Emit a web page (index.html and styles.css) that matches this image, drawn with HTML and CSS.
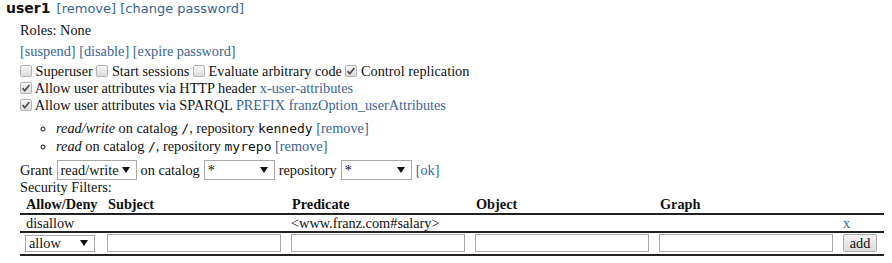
FILE: index.html
```html
<!DOCTYPE html>
<html lang="en">
<head>
    <meta charset="UTF-8">
    <title>User user1</title>
    <link rel="stylesheet" href="styles.css">
</head>
<body>
    <div class="user">
        <div class="user-head">
            <span class="name">user1</span>
            <a href="#">[remove]</a>
            <a href="#">[change password]</a>
        </div>

        <div class="user-body">
            <div class="roles">Roles: None</div>
            <div class="actions">
                <a href="#">[suspend]</a> <a href="#">[disable]</a> <a href="#">[expire password]</a>
            </div>

            <div class="perms">
                <div>
                    <label><input type="checkbox"> Superuser</label>
                    <label><input type="checkbox"> Start sessions</label>
                    <label><input type="checkbox"> Evaluate arbitrary code</label>
                    <label><input type="checkbox" checked> Control replication</label>
                </div>
                <div>
                    <label><input type="checkbox" checked> Allow user attributes via HTTP header <a href="#">x-user-attributes</a></label>
                </div>
                <div>
                    <label><input type="checkbox" checked> Allow user attributes via SPARQL <a href="#">PREFIX franzOption_userAttributes</a></label>
                </div>
            </div>

            <ul class="grants">
                <li><em>read/write</em> on catalog <code>/</code>, repository <code>kennedy</code> <a href="#">[remove]</a></li>
                <li><em>read</em> on catalog <code>/</code>, repository <code>myrepo</code> <a href="#">[remove]</a></li>
            </ul>

            <div class="grant-form">
                <span>Grant</span>
                <select class="sel-access">
                    <option>read/write</option>
                    <option>read</option>
                    <option>write</option>
                </select>
                <span>on catalog</span>
                <select class="sel-wide">
                    <option>*</option>
                </select>
                <span>repository</span>
                <select class="sel-wide">
                    <option>*</option>
                </select>
                <a href="#">[ok]</a>
            </div>

            <div class="sec-title">Security Filters:</div>

            <table class="filters">
                <colgroup>
                    <col class="c-kind">
                    <col class="c-field">
                    <col class="c-field">
                    <col class="c-field">
                    <col class="c-field">
                    <col class="c-act">
                </colgroup>
                <thead>
                    <tr>
                        <th>Allow/Deny</th>
                        <th>Subject</th>
                        <th>Predicate</th>
                        <th>Object</th>
                        <th>Graph</th>
                        <th></th>
                    </tr>
                </thead>
                <tbody>
                    <tr>
                        <td>disallow</td>
                        <td></td>
                        <td>&lt;www.franz.com#salary&gt;</td>
                        <td></td>
                        <td></td>
                        <td><a href="#">x</a></td>
                    </tr>
                    <tr class="new-row">
                        <td>
                            <select class="sel-kind">
                                <option>allow</option>
                                <option>disallow</option>
                            </select>
                        </td>
                        <td><input type="text"></td>
                        <td><input type="text"></td>
                        <td><input type="text"></td>
                        <td><input type="text"></td>
                        <td><button type="button">add</button></td>
                    </tr>
                </tbody>
            </table>
        </div>
    </div>
</body>
</html>
```

FILE: styles.css
```css
body {
    margin: 0;
    padding: 0 6px;
    font-family: "Liberation Serif", "Times New Roman", serif;
    font-size: 14.3px;
    color: #111;
    background-color: #ffffff;
}

a {
    color: #3a6494;
    text-decoration: none;
}

.user-head {
    font-family: "DejaVu Sans", Verdana, sans-serif;
    font-size: 13px;
    line-height: 16px;
}

.user-head .name {
    font-size: 14px;
    font-weight: bold;
    color: #111;
    margin-right: 2px;
}

.user-body {
    margin-left: 14px;
}

.roles {
    margin-top: 5px;
    line-height: 16px;
}

.actions {
    margin-top: 5px;
    line-height: 16px;
}

.perms {
    margin-top: 4px;
    line-height: 17px;
}

.perms input[type="checkbox"] {
    appearance: none;
    -webkit-appearance: none;
    width: 12px;
    height: 12px;
    margin: 0;
    vertical-align: -1px;
    border: 1px solid #b4b4b4;
    border-radius: 2px;
    background: linear-gradient(#f6f6f6, #dcdcdc);
}

.perms input[type="checkbox"]:checked {
    background: url("data:image/svg+xml,%3Csvg xmlns='http://www.w3.org/2000/svg' width='12' height='12' viewBox='0 0 12 12'%3E%3Cpath d='M2.5 6.2 L4.8 8.6 L9.4 3' fill='none' stroke='%23555' stroke-width='1.8'/%3E%3C/svg%3E") no-repeat center, linear-gradient(#f6f6f6, #dcdcdc);
}

.grants {
    margin: 5px 0;
    padding-left: 36px;
    line-height: 18px;
    list-style: circle;
}

.grants code {
    font-family: "DejaVu Sans Mono", monospace;
    font-size: 13px;
    line-height: 1;
}

.grant-form {
    display: flex;
    align-items: center;
    gap: 4px;
    height: 20px;
}

select {
    appearance: none;
    -webkit-appearance: none;
    box-sizing: border-box;
    font-family: "Liberation Serif", "Times New Roman", serif;
    font-size: 14.3px;
    color: #111;
    border: 1px solid #a9a9a9;
    border-radius: 0;
    padding: 0 16px 0 3px;
    margin: 0;
    background: #fff url("data:image/svg+xml,%3Csvg xmlns='http://www.w3.org/2000/svg' width='8' height='6' viewBox='0 0 8 6'%3E%3Cpath d='M0 0 H8 L4 6 Z' fill='%23111'/%3E%3C/svg%3E") no-repeat right 6px center;
}

.sel-access {
    width: 80px;
    height: 20px;
}

.sel-wide {
    width: 71px;
    height: 20px;
}

.sec-title {
    line-height: 15px;
}

.filters {
    width: 864px;
    table-layout: fixed;
    border-collapse: collapse;
}

.c-kind {
    width: 82px;
}

.c-field {
    width: 184px;
}

.c-act {
    width: 46px;
}

.filters th,
.filters td {
    padding: 0 5px;
    text-align: left;
    border-bottom: 2px solid #222;
    line-height: 16px;
}

.filters th {
    padding-left: 6px;
    line-height: 18px;
}

.filters tbody td:first-child {
    padding-left: 6px;
}

.filters .new-row td {
    padding: 1px 5px 2px;
    height: 18px;
}

.sel-kind {
    width: 70px;
    height: 17px;
    line-height: 15px;
    display: block;
    margin-left: -1px;
}

.new-row input[type="text"] {
    box-sizing: border-box;
    display: block;
    width: 100%;
    height: 18px;
    margin: 0;
    border: 1px solid #a9a9a9;
    padding: 0 3px;
    font-family: "Liberation Serif", serif;
    font-size: 14px;
}

.new-row button {
    display: block;
    width: 34px;
    height: 18px;
    padding: 0;
    margin-top: -1px;
    font-family: "Liberation Serif", serif;
    font-size: 14.3px;
    color: #111;
    border: 1px solid #adadad;
    border-radius: 2px;
    background: linear-gradient(#f2f2f2, #dddddd);
}
```
